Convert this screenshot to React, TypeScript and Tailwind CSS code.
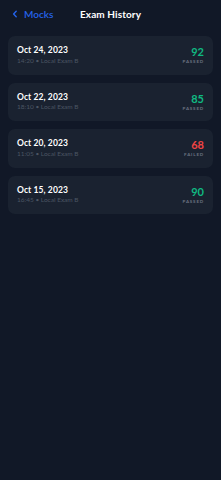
import React from "react";

type Exam = { date: string; time: string; score: number; passed: boolean };

const exams: Exam[] = [
  { date: "Oct 24, 2023", time: "14:20", score: 92, passed: true },
  { date: "Oct 22, 2023", time: "18:10", score: 85, passed: true },
  { date: "Oct 20, 2023", time: "11:05", score: 68, passed: false },
  { date: "Oct 15, 2023", time: "16:45", score: 90, passed: true },
];

export default function App() {
  return (
    <div
      className="min-h-[480px] w-[221px] bg-[#111827] text-white"
      style={{ fontFamily: "Lato, 'Noto Sans', sans-serif" }}
    >
      <div className="grid h-[28px] grid-cols-[1fr_auto_1fr] items-center px-[11px]">
        <div className="flex items-center gap-[5px] text-[#2563eb]">
          <svg width="8" height="8" viewBox="0 0 8 8" fill="none">
            <path d="M5.2 1.3 L2.6 4 L5.2 6.7" stroke="currentColor" strokeWidth="1.4" strokeLinecap="round" strokeLinejoin="round" />
          </svg>
          <span className="text-[10px] font-semibold leading-none">Mocks</span>
        </div>
        <div className="text-[10px] font-bold leading-none tracking-[0.1px]">Exam History</div>
        <div />
      </div>
      <div className="flex flex-col gap-[8px] px-[8px] pt-[8px]">
        {exams.map((e) => (
          <div
            key={e.date}
            className="flex h-[38.5px] items-center justify-between rounded-[7px] bg-[#1a2230] pl-[9px] pr-[9px]"
          >
            <div className="flex flex-col gap-[3px]">
              <div className="text-[8.5px] font-bold leading-none tracking-[0.1px]">{e.date}</div>
              <div className="text-[6.5px] leading-none text-[#4b5563]">
                {e.time} • Local Exam B
              </div>
            </div>
            <div className="flex flex-col items-end gap-[3px]">
              <div
                className={
                  "text-[11px] font-bold leading-none " +
                  (e.passed ? "text-[#10b981]" : "text-[#ef4444]")
                }
              >
                {e.score}
              </div>
              <div className="text-[4.5px] font-bold uppercase leading-none tracking-[0.8px] text-[#6b7280]">
                {e.passed ? "Passed" : "Failed"}
              </div>
            </div>
          </div>
        ))}
      </div>
    </div>
  );
}
